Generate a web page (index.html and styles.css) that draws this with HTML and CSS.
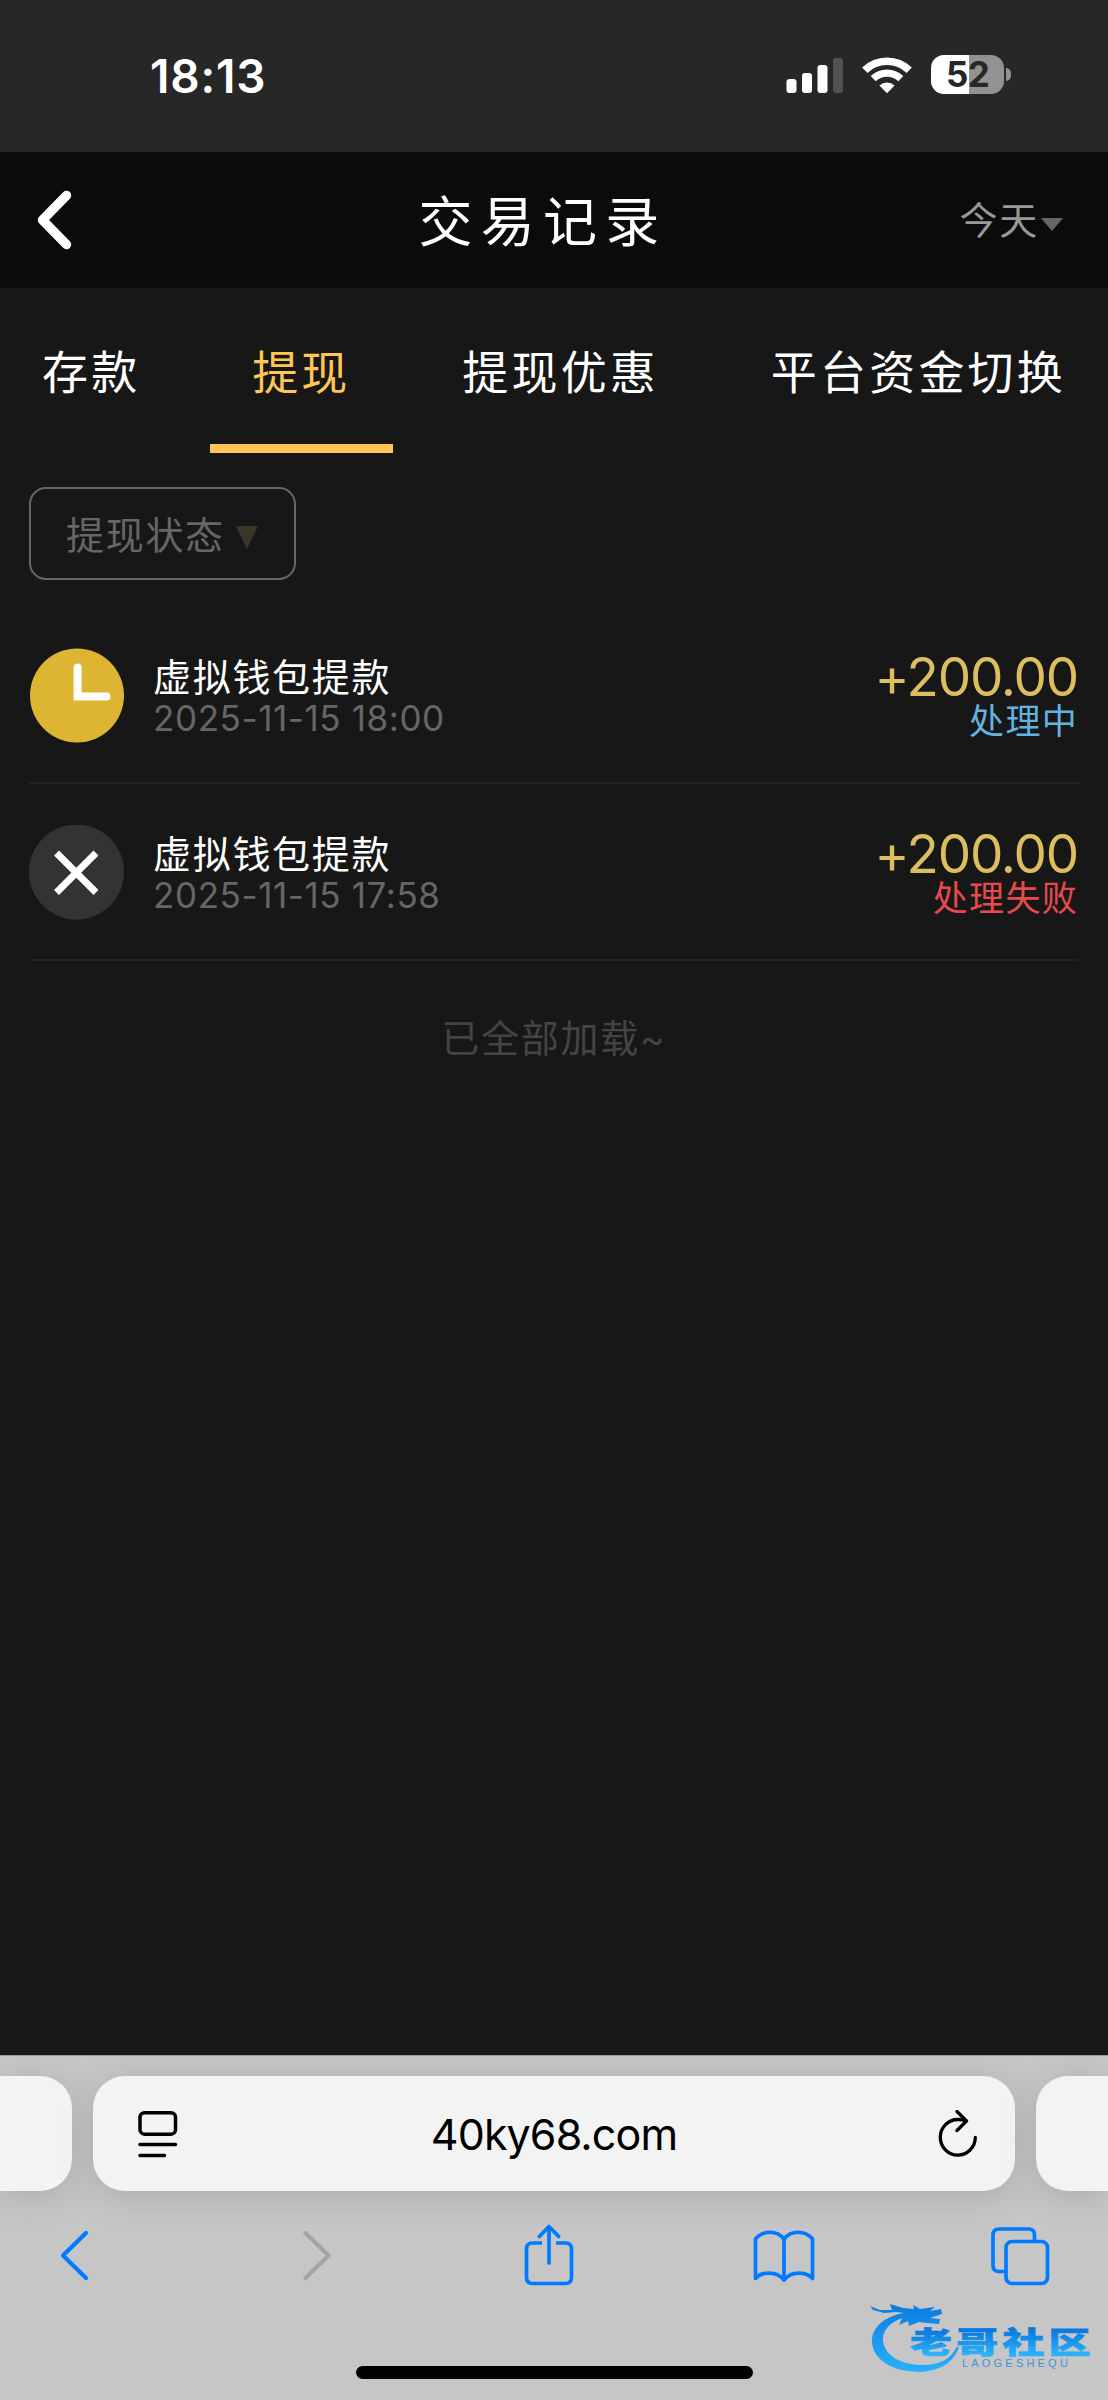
FILE: index.html
```
<!DOCTYPE html>
<html lang="zh-CN">
<head>
    <meta charset="UTF-8">
    <meta name="viewport" content="width=device-width, initial-scale=1.0">
    <title>交易记录</title>
    <link rel="stylesheet" href="styles.css">
</head>
<body>
    <div class="status-bar">
        <span class="time">18:13</span>
        <div class="status-icons">
            <svg class="signal" width="58" height="36" viewBox="0 0 58 36" fill="#fff">
                <rect x="0.5" y="22" width="10" height="14" rx="3"/>
                <rect x="16" y="16" width="10" height="20" rx="3"/>
                <rect x="31.5" y="8" width="10" height="28" rx="3"/>
                <rect x="47" y="1" width="10" height="35" rx="3" fill="#525252"/>
            </svg>
            <svg class="wifi" width="50" height="38" viewBox="0 0 50 38" fill="none" stroke="#fff">
                <path d="M2.8 14.2a32 32 0 0 1 44.4 0" stroke-width="7.6"/>
                <path d="M11.2 22.6a20 20 0 0 1 27.6 0" stroke-width="7.2"/>
                <path d="M25 37.2l-7.6-7.7a11 11 0 0 1 15.2 0z" fill="#fff" stroke="none"/>
            </svg>
            <div class="battery"><span>52</span></div>
            <div class="battery-cap"></div>
        </div>
    </div>

    <header>
        <svg class="back" width="36" height="60" viewBox="0 0 36 60" fill="none" stroke="#fff" stroke-width="9.500" stroke-linecap="round" stroke-linejoin="round">
            <path d="M29.500 5.500L5.500 30l24 24.500"/>
        </svg>
        <h1>交易记录</h1>
        <div class="date-filter">今天<i class="caret"></i></div>
    </header>

    <nav class="tabs">
        <a class="tab">存款</a>
        <a class="tab active">提现</a>
        <a class="tab">提现优惠</a>
        <a class="tab">平台资金切换</a>
    </nav>

    <main>
        <div class="filter">提现状态<i class="filter-caret"></i></div>

        <ul class="records">
            <li class="record">
                <svg class="record-icon" width="95" height="95" viewBox="0 0 95 95">
                    <circle cx="48" cy="47.5" r="47" fill="#deb433"/>
                    <path d="M48.6 19.5V48.5H77.5" fill="none" stroke="#fff" stroke-width="8" stroke-linecap="round"/>
                </svg>
                <div class="record-info">
                    <p class="record-name">虚拟钱包提款</p>
                    <p class="record-date">2025-11-15 18:00</p>
                </div>
                <div class="record-right">
                    <p class="amount">+200.00</p>
                    <p class="state state-pending">处理中</p>
                </div>
            </li>
            <li class="record">
                <svg class="record-icon" width="95" height="95" viewBox="0 0 95 95">
                    <circle cx="47.5" cy="47" r="47.5" fill="#333"/>
                    <path d="M27.5 28L67 67.500M67 28L27.5 67.500" stroke="#fff" stroke-width="7"/>
                </svg>
                <div class="record-info">
                    <p class="record-name">虚拟钱包提款</p>
                    <p class="record-date">2025-11-15 17:58</p>
                </div>
                <div class="record-right">
                    <p class="amount">+200.00</p>
                    <p class="state state-failed">处理失败</p>
                </div>
            </li>
        </ul>
        <p class="loaded">已全部加载~</p>
    </main>

    <footer>
        <div class="address-row">
            <div class="card card-prev"></div>
            <div class="card card-url">
                <svg width="40" height="48" viewBox="0 0 40 48" fill="none" stroke="#000" stroke-width="3.500" stroke-linecap="round">
                    <rect x="2" y="2.700" width="35.500" height="21.500" rx="4.500"/>
                    <path d="M2 34.500H37.500M2 45.500H26.500"/>
                </svg>
                <span class="url">40ky68.com</span>
                <svg width="40" height="48" viewBox="0 0 40 48" fill="none" stroke="#000" stroke-width="3.300" stroke-linecap="round" stroke-linejoin="round">
                    <path d="M37.300 27.500a17.500 17.800 0 1 1-17.500-18q4 0 8 1"/>
                    <path d="M19 0.700l9.500 9.500-9.500 9.500" transform="translate(0 .8)"/>
                </svg>
            </div>
            <div class="card card-next"></div>
        </div>
        <div class="toolbar">
            <svg width="62" height="64" viewBox="0 0 62 64" fill="none" stroke="#007aff" stroke-width="4.200" stroke-linecap="round" stroke-linejoin="round">
                <path d="M41 10L18 32.500 41 55"/>
            </svg>
            <svg width="62" height="64" viewBox="0 0 62 64" fill="none" stroke="#a3a3a3" stroke-width="4.200" stroke-linecap="round" stroke-linejoin="round">
                <path d="M24.500 10l23 22.500-23 22.500"/>
            </svg>
            <svg width="62" height="64" viewBox="-7 0 62 64" fill="none" stroke="#007aff" stroke-width="3.700" stroke-linecap="round" stroke-linejoin="round">
                <path d="M25 40V3.500M15.300 13.500L25 3.500l9.700 10"/>
                <path d="M18 20H8.500q-6 0-6 6v28.500q0 6 6 6h33q6 0 6-6V26q0-6-6-6H32" stroke-linecap="butt"/>
            </svg>
            <svg width="62" height="64" viewBox="0 0 62 64" fill="none" stroke="#007aff" stroke-width="3.700" stroke-linecap="round" stroke-linejoin="round">
                <path d="M31 16C24 7 10 7 2.500 16V55.500C9 48 24 48 31 57C38 48 53 48 59.500 55.500V16C52 7 38 7 31 16V57"/>
            </svg>
            <svg width="62" height="64" viewBox="-1 1 62 64" fill="none" stroke="#007aff" stroke-width="3.700">
                <rect x="16" y="19.500" width="41.500" height="42" rx="6"/>
                <path d="M44.500 19V13q0-6-6-6H9q-6 0-6 6v30.500q0 6 6 6h7"/>
            </svg>
        </div>
        <div class="home-indicator"></div>

        <svg class="watermark" width="230" height="84" viewBox="0 0 230 84">
            <defs>
                <linearGradient id="blue" gradientUnits="userSpaceOnUse" x1="0" y1="8" x2="0" y2="76">
                    <stop offset="0" stop-color="#0a7be0"/>
                    <stop offset="1" stop-color="#2bb2fb"/>
                </linearGradient>
                <linearGradient id="textBlue" x1="0" y1="0" x2="0" y2="1">
                    <stop offset="0.3" stop-color="#0a7be0"/>
                    <stop offset="0.85" stop-color="#2bb2fb"/>
                </linearGradient>
            </defs>
            <path fill="url(#blue)" d="M36 16C14 20 3 32 4 46C6 64 26 75 52 75C72 74 87 65 91 49L88 51C82 63 70 68 55 68C33 68 17 59 15 44C14 34 21 26 34 21L31 28L40 24L41 29L51 25L58 26L71 27L72 22L62 21L74 17L73 12L62 14L67 10L52 12L45 8L46 12L35 11L22 7L24 13L12 13L2 9L5 13L16 16L28 15Z"/>
            <text class="watermark-name" x="42" y="79.500" fill="url(#textBlue)" stroke="url(#textBlue)" transform="scale(1 .7)">老哥社区</text>
            <text class="watermark-latin" x="94" y="70" fill="#3c95dd">LAOGESHEQU</text>
        </svg>
    </footer>
</body>
</html>
```
FILE: styles.css
```
:root {
    --gold: #fec655;
    --background-color: #171717;
    --muted: #666;
}

* {
    box-sizing: border-box;
}

body {
    margin: 0;
    width: 1108px;
    height: 2400px;
    display: flex;
    flex-direction: column;
    overflow: hidden;
    font-family: Inter, "Noto Sans CJK SC", sans-serif;
    background-color: var(--background-color);
    color: #fff;
}

p, h1, ul {
    margin: 0;
    padding: 0;
}

svg {
    display: block;
    flex: none;
}

/* status bar */
.status-bar {
    height: 152px;
    flex: none;
    display: flex;
    justify-content: space-between;
    padding: 55px 97px 0 150px;
    background-color: #272727;
}

.time {
    font-size: 46px;
    font-weight: 600;
    line-height: 42px;
    letter-spacing: 0.8px;
}

.status-icons {
    display: flex;
    height: 39px;
    align-items: center;
}

.wifi {
    margin: 0 19px 0 18px;
}

.battery {
    width: 73px;
    height: 39px;
    border-radius: 13px;
    background: linear-gradient(to right, #fff 38px, #929292 38px);
    color: #272727;
    font-size: 35px;
    font-weight: 700;
    line-height: 39px;
    letter-spacing: -0.7px;
    text-align: center;
}

.battery-cap {
    width: 5px;
    height: 13px;
    margin-left: 2px;
    border-radius: 0 5px 5px 0;
    background-color: #929292;
}

/* page header */
header {
    height: 136px;
    flex: none;
    display: grid;
    grid-template-columns: 1fr auto 1fr;
    align-items: center;
    padding: 0 45px 0 37px;
    background-color: #0b0b0b;
}

.back {
    margin-top: -1px;
}

h1 {
    margin: 5px 14px 0 0;
    font-size: 54px;
    font-weight: 400;
    line-height: 60px;
    letter-spacing: 8.200px;
}

.date-filter {
    display: flex;
    align-items: center;
    justify-content: flex-end;
    font-size: 38px;
    line-height: 46px;
    letter-spacing: 1.700px;
    color: #999;
}

.caret {
    margin: 8px 0 0 2px;
    border: 11px solid transparent;
    border-top: 13px solid var(--muted);
    border-bottom: 0;
}

/* tabs */
.tabs {
    height: 165px;
    flex: none;
    display: flex;
    justify-content: space-between;
}

.tab {
    padding: 54px 42px 0;
    font-size: 46px;
    line-height: 60px;
    letter-spacing: 3.200px;
    white-space: nowrap;
}

.tab.active {
    color: var(--gold);
    border-bottom: 9px solid var(--gold);
}

/* records */
main {
    flex: 1;
    padding: 34px 29px 0;
}

.filter {
    width: 267px;
    height: 93px;
    display: flex;
    align-items: center;
    padding: 2px 0 0 35px;
    border: 2px solid var(--muted);
    border-radius: 17px;
    font-size: 38px;
    line-height: 46px;
    letter-spacing: 1.700px;
    color: var(--muted);
}

.filter-caret {
    margin: 5px 0 0 11px;
    border: 11px solid transparent;
    border-top: 23px solid #3c3629;
    border-bottom: 0;
}

.records {
    list-style: none;
    margin-top: 27px;
}

.record {
    height: 177px;
    display: flex;
    padding-top: 41px;
    border-bottom: 2px solid #222;
}

.record-info {
    flex: 1;
    padding: 6px 0 0 29px;
}

.record-name {
    font-size: 38px;
    line-height: 46px;
    letter-spacing: 1.700px;
}

.record-date {
    font-size: 35px;
    font-weight: 400;
    line-height: 36px;
    letter-spacing: 0.6px;
    color: var(--muted);
}

.record-right {
    text-align: right;
}

.amount {
    padding-top: 3px;
    margin-right: 1px;
    font-size: 53px;
    line-height: 52px;
    letter-spacing: -1.200px;
    color: #dcbe5f;
}

.state {
    margin-right: 1px;
    font-size: 35px;
    line-height: 37px;
    letter-spacing: 1.300px;
}

.state-pending {
    color: #62b3e0;
}

.state-failed {
    color: #e64b4b;
}

.loaded {
    margin-top: 52px;
    text-align: center;
    font-size: 38px;
    line-height: 50px;
    letter-spacing: 1.700px;
    color: #444;
}

/* browser bar */
footer {
    position: relative;
    height: 345px;
    flex: none;
    overflow: hidden;
    border-top: 1px solid #999;
    background-color: #c6c6c6;
}

.address-row {
    display: flex;
    gap: 21px;
    padding-top: 20px;
}

.card {
    height: 115px;
    border-radius: 32px;
    background-color: #f3f3f3;
    box-shadow: 0 6px 36px rgba(0, 0, 0, 0.13);
}

.card-prev {
    width: 72px;
    border-radius: 0 32px 32px 0;
}

.card-url {
    width: 922px;
    display: flex;
    align-items: center;
    justify-content: space-between;
    padding: 0 37px 0 45px;
}

.card-next {
    width: 72px;
    border-radius: 32px 0 0 32px;
}

.url {
    margin-right: 8px;
    font-size: 43px;
    line-height: 50px;
    letter-spacing: -0.9px;
    color: #000;
}

.toolbar {
    display: flex;
    justify-content: space-between;
    padding: 32px 57px 0 45px;
}

.home-indicator {
    width: 397px;
    height: 13px;
    margin: 79px auto 0;
    border-radius: 7px;
    background-color: #000;
}

/* logo laid over the browser bar */
.watermark {
    position: absolute;
    left: 868px;
    top: 241px;
}

.watermark-name {
    font-family: "Noto Sans CJK SC", sans-serif;
    font-size: 42px;
    font-weight: 900;
    letter-spacing: 4.200px;
    stroke-width: 1px;
}

.watermark-latin {
    font-family: "Liberation Sans", sans-serif;
    font-size: 11px;
    letter-spacing: 3.200px;
}
```
